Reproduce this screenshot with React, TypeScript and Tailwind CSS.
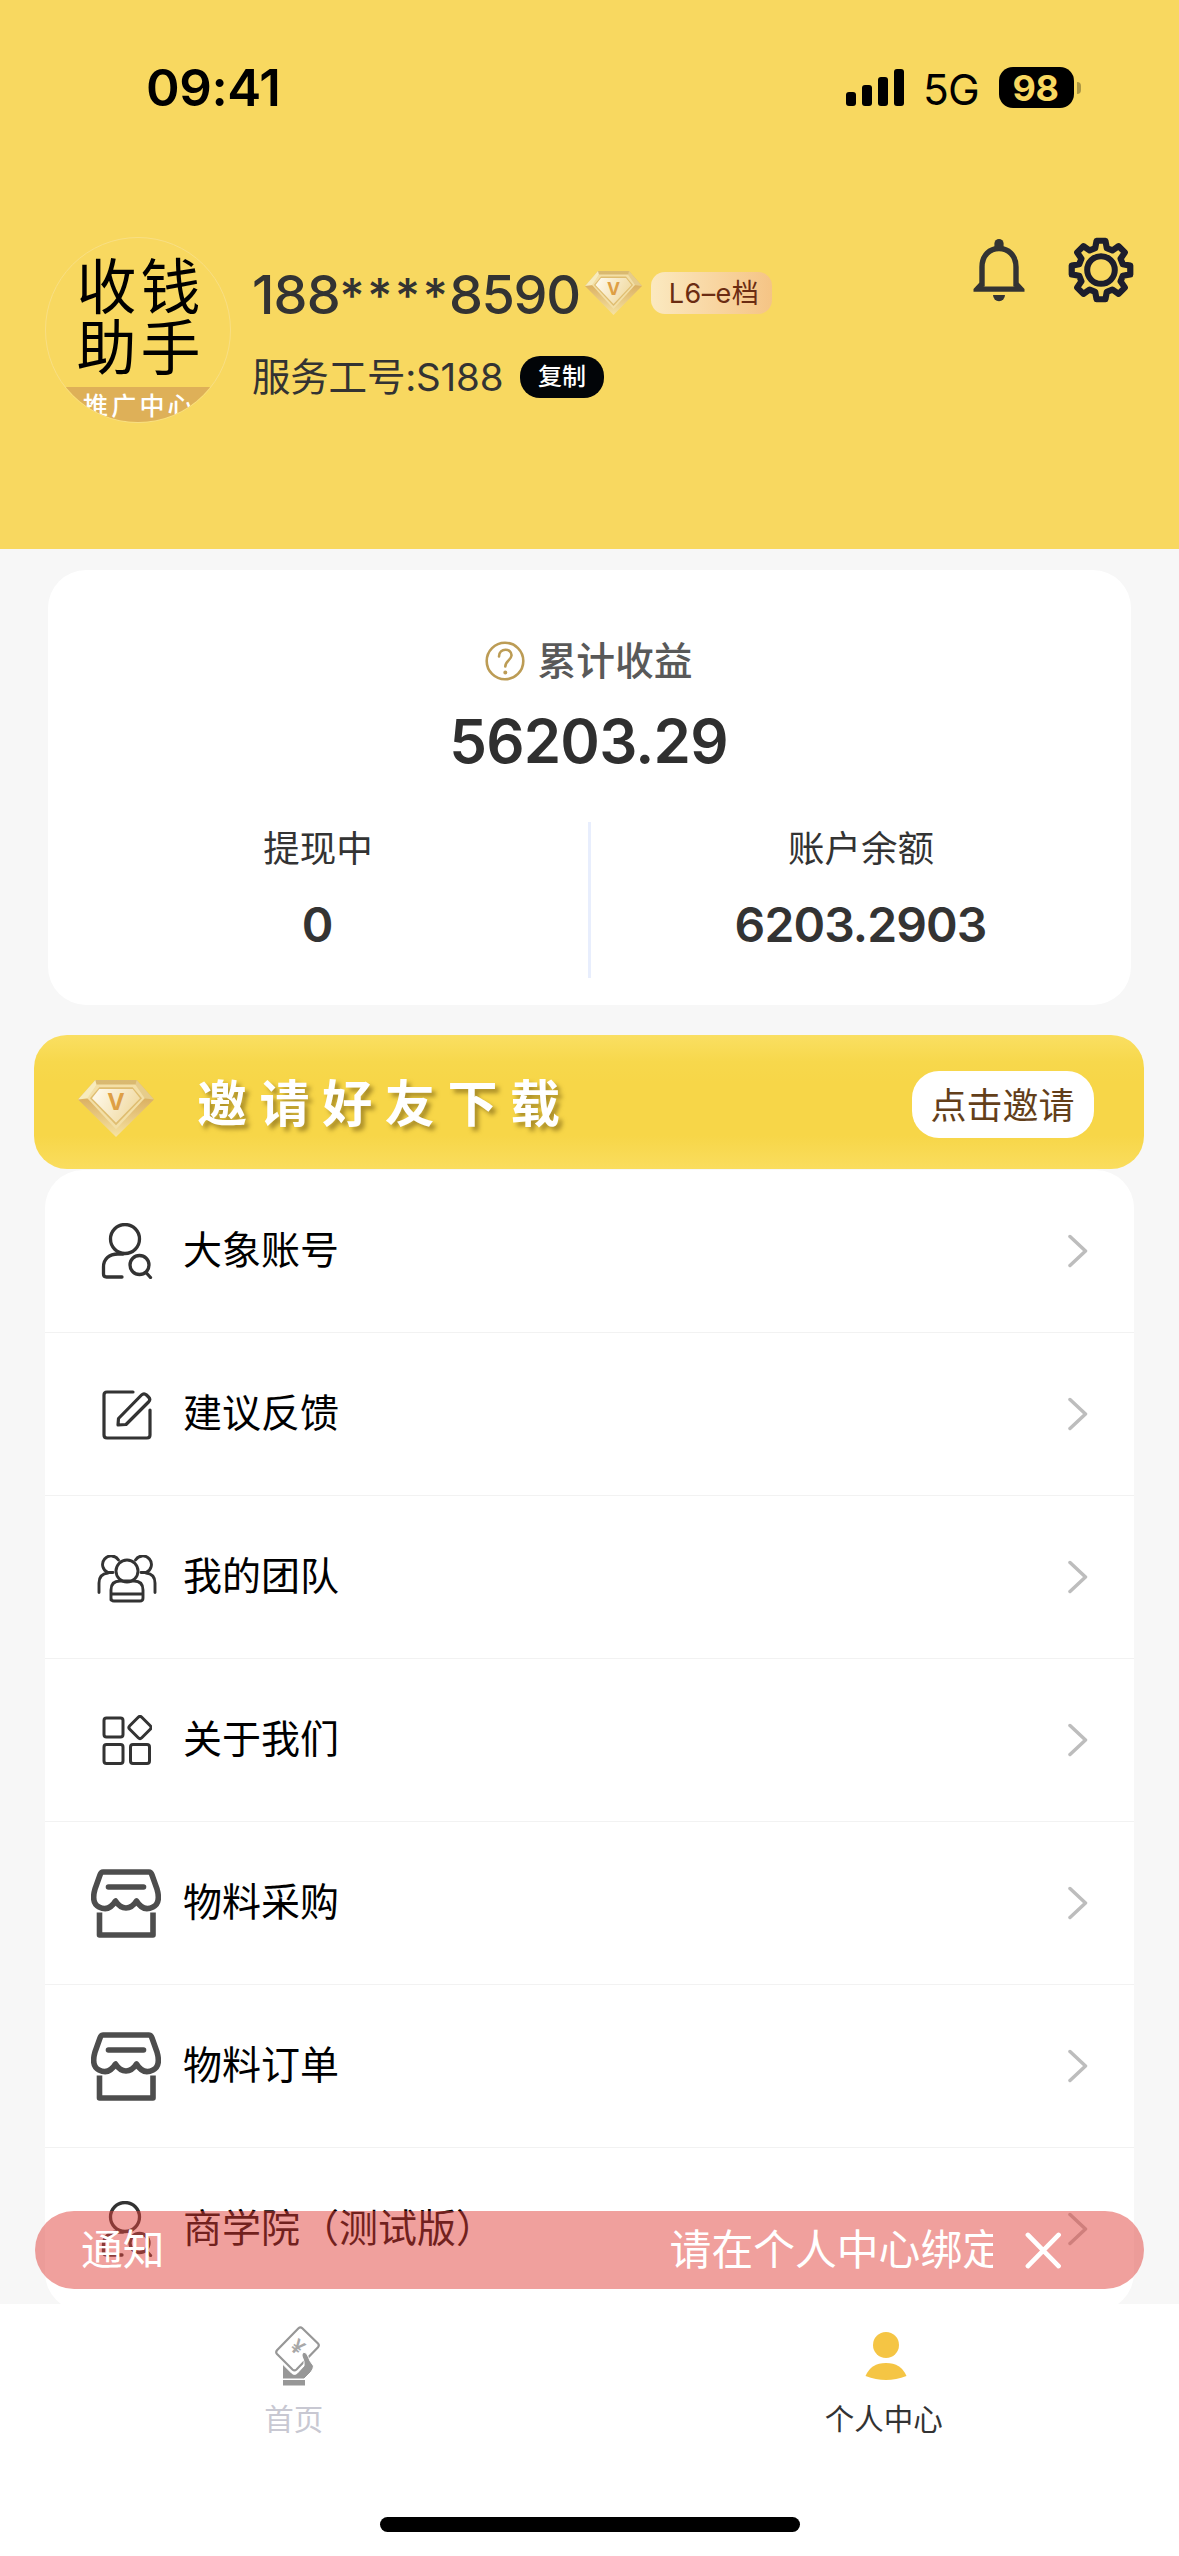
import React, { type ReactNode } from 'react';

const strokeProps = {
  fill: 'none',
  strokeLinecap: 'round' as const,
  strokeLinejoin: 'round' as const,
};

function Diamond({ className, id }: { className: string; id: string }) {
  return (
    <svg viewBox="0 0 57 44" preserveAspectRatio="none" className={className}>
      <defs>
        <linearGradient id={`${id}-rim`} x1="0" y1="0" x2="0" y2="1">
          <stop offset="0" stopColor="#d9ba72" />
          <stop offset="0.35" stopColor="#dcb264" />
          <stop offset="1" stopColor="#f6e3a4" />
        </linearGradient>
        <linearGradient id={`${id}-face`} x1="0" y1="0" x2="1" y2="0.4">
          <stop offset="0" stopColor="#fffbf0" />
          <stop offset="1" stopColor="#f1dba4" />
        </linearGradient>
      </defs>
      <path d="M13 0H44L57 15L28.500 44L0 15Z" fill={`url(#${id}-rim)`} />
      <path d="M13 0L0 15L8 14L14 4Z" fill="#f7ebbd" />
      <path d="M44 0L57 15L49 14L43 4Z" fill="#e6cc8b" />
      <path d="M14 3.500H43L50 14L28.500 38L7 14Z" fill="#f3dfa6" />
      <path d="M16 5.500H41L48 14L28.500 35L9 14Z" fill="#dfbd70" />
      <path d="M16 7H41L46.500 14L28.500 33L10.500 14Z" fill={`url(#${id}-face)`} />
      <text x="28.500" y="23.500" textAnchor="middle" fontFamily="Inter" fontWeight="700" fontSize="17.500" fill="#de9f45">
        V
      </text>
    </svg>
  );
}

function Bell() {
  return (
    <svg viewBox="0 0 52 63" className="h-[63px] w-[52px]" fill="#333">
      <path d="M9 47.500V28C9 16 17 9.500 26 9.500S43 16 43 28V47.500" fill="none" stroke="#333" strokeWidth="5.400" />
      <path d="M6.500 43.500L0.500 50V52.700H51.500V50L45.500 43.500L41 47.500H11Z" />
      <rect x="21.400" y="0" width="9.200" height="11" rx="4.600" />
      <path d="M20 56H32A6 6.200 0 0 1 20 56Z" />
    </svg>
  );
}

const gearPoints = Array.from({ length: 8 }, (_, i) => {
  const a = (i * Math.PI) / 4;
  const point = (r: number, d: number) =>
    `${(33 + r * Math.sin(a + d)).toFixed(2)} ${(33 - r * Math.cos(a + d)).toFixed(2)}`;
  return [point(22.6, -0.26), point(29.6, -0.15), point(29.6, 0.15), point(22.6, 0.26)];
}).flat();

function Gear() {
  return (
    <svg viewBox="0 0 66 66" className="size-[66px]" stroke="#1d1e2c" {...strokeProps}>
      <path d={`M${gearPoints.join('L')}Z`} strokeWidth="6.200" />
      <circle cx="33" cy="33" r="13.800" strokeWidth="6" />
    </svg>
  );
}

function AccountIcon() {
  return (
    <svg viewBox="0 0 52 56" className="h-[56px] w-[52px]" stroke="#333" strokeWidth="3.300" {...strokeProps}>
      <ellipse cx="24" cy="16" rx="14.500" ry="14.500" />
      <path d="M22 31H17C8 31 2.500 36 2.500 44V51Q2.500 54 5.500 54H21" />
      <circle cx="38.500" cy="42" r="9.500" />
      <path d="M45 49.500L49.500 54.500" />
    </svg>
  );
}

function FeedbackIcon() {
  return (
    <svg viewBox="0 0 50 50" className="mt-[2px] size-[50px]" stroke="#333" strokeWidth="3.200" {...strokeProps}>
      <path d="M31 2H5Q2 2 2 5V45Q2 48 5 48H45Q48 48 48 45V20" />
      <path d="M16 35L16.500 28.500L39.500 5Q42 2.500 44.500 5L46.500 7Q49 9.500 46.500 12L24 34.500Z" />
    </svg>
  );
}

function TeamIcon() {
  return (
    <svg viewBox="0 0 60 48" className="mt-[3px] h-[48px] w-[60px]" stroke="#333" strokeWidth="2.900" {...strokeProps}>
      <circle cx="30" cy="16" r="11" />
      <path d="M14 45V35Q14 26 23 26H37Q46 26 46 35V43Q46 46 43 46H17Q14 46 14 43M14 39H46" />
      <path d="M21.500 5A8.600 8.600 0 1 0 11 17.500H16M11 18Q2 19 2 28V37.500" />
      <path d="M38.500 5A8.600 8.600 0 1 1 49 17.500H44M49 18Q58 19 58 28V37.500" />
    </svg>
  );
}

function AboutIcon() {
  return (
    <svg viewBox="0 0 50 50" className="size-[50px]" stroke="#333" strokeWidth="3" {...strokeProps}>
      <rect x="2" y="3" width="19" height="19" rx="2.500" />
      <rect x="2" y="29.500" width="19" height="19" rx="2.500" />
      <rect x="28.500" y="29.500" width="19" height="19" rx="2.500" />
      <rect x="29.500" y="4" width="17" height="17" rx="2.500" transform="rotate(45 38 12.500)" />
    </svg>
  );
}

function StoreIcon() {
  return (
    <svg viewBox="0 0 70 69" className="mr-[3px] h-[69px] w-[70px]" stroke="#4d4d4d" strokeWidth="5.600" {...strokeProps}>
      <path d="M12 3H58Q60 3 61 6L66 20Q70 34 62 38Q52 43 45.500 32Q41 39 35 39Q29 39 24.500 32Q18 43 8 38Q0 34 4 20L9 6Q10 3 12 3Z" />
      <path d="M17.500 18H52.500" />
      <path d="M8.500 43.500V66H62V43.500" strokeLinecap="butt" />
    </svg>
  );
}

function Chevron() {
  return (
    <svg viewBox="0 0 20 34" className="h-[34px] w-[20px]" stroke="#bdbdbd" strokeWidth="3.500" {...strokeProps}>
      <path d="M2 2.500L17.500 17L2 31.500" />
    </svg>
  );
}

function HomeIcon() {
  return (
    <svg viewBox="0 0 46 60" className="h-[60px] w-[46px]">
      <path d="M23.500 2.300Q25.400 0.400 27.300 2.300L43 17.500Q44.600 19.200 43 21.200L21.500 43.500Q19.400 45.300 17.500 43.500L2 28Q0.400 26.200 2 24.200Z" fill="none" stroke="#979797" strokeWidth="2.200" />
      <text x="22.500" y="28" textAnchor="middle" fontFamily="Inter" fontWeight="600" fontSize="20" fill="#a8a8a8" transform="rotate(40 22.500 21)">
        ¥
      </text>
      <path d="M7.500 38L17 47.500Q19.500 49.500 22 47.500L29 40Q30 36 27 30Q27 26 30 26.500Q32 27 35 35L38.500 40Q38.500 43 36 46L29 53H7.500Z" fill="#979797" stroke="#fff" strokeWidth="1" />
      <rect x="8" y="54" width="22" height="5.500" fill="#979797" />
    </svg>
  );
}

function PersonIcon() {
  return (
    <svg viewBox="0 0 42 50" className="h-[50px] w-[42px]" fill="#f5c544">
      <circle cx="21" cy="14" r="13" />
      <path d="M0.500 45Q6 32 21 32T41.500 45Q31 49 21 49T0.500 45Z" />
    </svg>
  );
}

const menu: { label: string; icon: ReactNode }[] = [
  { label: '大象账号', icon: <AccountIcon /> },
  { label: '建议反馈', icon: <FeedbackIcon /> },
  { label: '我的团队', icon: <TeamIcon /> },
  { label: '关于我们', icon: <AboutIcon /> },
  { label: '物料采购', icon: <StoreIcon /> },
  { label: '物料订单', icon: <StoreIcon /> },
  { label: '商学院（测试版）', icon: <AccountIcon /> },
];

function StatusBar() {
  return (
    <div className="flex h-[176px] items-start justify-between pl-[146px] pr-[98px] pt-[67px] text-black">
      <div className="mt-[-4px] text-[51px] leading-[50px] font-semibold tracking-[-0.4px]">09:41</div>
      <div className="flex h-[41px] items-center">
        <div className="flex h-[37px] items-end gap-[6px]">
          <span className="h-[14px] w-[10px] rounded-[3px] bg-black" />
          <span className="h-[21px] w-[10px] rounded-[3px] bg-black" />
          <span className="h-[29px] w-[10px] rounded-[3px] bg-black" />
          <span className="h-[37px] w-[10px] rounded-[3px] bg-black" />
        </div>
        <span className="mt-[4px] ml-[19px] w-[76px] text-[42.500px] leading-[42px] tracking-[-0.8px]">5G</span>
        <span className="flex h-[41px] w-[75px] items-center justify-center rounded-[14px] bg-black pt-px pr-[2px] text-[36px] leading-[41px] font-bold tracking-[-0.5px] text-[#f8d860]">
          98
        </span>
        <span className="ml-[3px] h-[12px] w-[4px] rounded-r-full bg-[#ad9743]" />
      </div>
    </div>
  );
}

function Profile() {
  return (
    <div className="flex items-start pl-[45px] pr-[45px] pt-[61px]">
      <div className="flex size-[186px] shrink-0 flex-col items-center overflow-hidden rounded-full border border-[#f9df84]">
        <div className="mt-[19px] ml-[5px] w-[130px] text-center text-[60px] leading-[61px] tracking-[4px] text-black">
          <div>收钱</div>
          <div>助手</div>
        </div>
        <div className="mt-[8px] w-[186px] flex-1 bg-[#deb058] pl-[38px] text-[25px] leading-[38px] font-medium tracking-[3.2px] whitespace-nowrap text-white">
          推广中心
        </div>
      </div>
      <div className="ml-[21px] flex flex-col text-[#333]">
        <div className="mt-[28px] flex h-[56px] items-center">
          <span className="flex w-[333px] pt-[4px] text-[54px] leading-[56px] font-medium whitespace-nowrap">
            <span className="w-[86px] tracking-[-0.8px]">188</span>
            <span className="mt-px grid w-[111px] grid-cols-4 text-center text-[48px]">
              <span>*</span>
              <span>*</span>
              <span>*</span>
              <span>*</span>
            </span>
            <span className="tracking-[-1.400px]">8590</span>
          </span>
          <Diamond id="gem-small" className="h-[44px] w-[57px]" />
          <span className="ml-[9px] flex h-[42px] w-[121px] items-center justify-center rounded-[14px] bg-linear-to-r from-[#fbe9c0] to-[#f5c485] pt-px pl-[5px] text-[27px] leading-[42px] tracking-[0.4px] text-[#6b2c12]">
            L6–e档
          </span>
        </div>
        <div className="mt-[34px] flex h-[44px] items-center">
          <span className="w-[268px] text-[38.500px] leading-[44px] tracking-[-0.2px] whitespace-nowrap">服务工号:S188</span>
          <span className="flex h-[42px] w-[84px] items-center justify-center rounded-[20px] bg-[#020508] text-[24px] leading-[42px] font-medium text-white">
            复制
          </span>
        </div>
      </div>
      <div className="ml-auto flex items-center gap-[43px]">
        <Bell />
        <Gear />
      </div>
    </div>
  );
}

function Earnings() {
  return (
    <section className="mx-[48px] mt-[21px] flex h-[435px] flex-col items-center rounded-[38px] bg-white text-[#333]">
      <div className="mt-[66px] flex h-[50px] items-center pr-[1px]">
        <svg viewBox="0 0 40 40" className="size-[40px]" stroke="#bc9c55" strokeWidth="2.600" {...strokeProps}>
          <circle cx="20" cy="20" r="18.300" />
          <path d="M14 15.500C14 6.500 27 6.800 26.500 14.500C26.200 19 20.300 20 20.300 25.500" />
          <circle cx="20.300" cy="31.500" r="1" fill="#bc9c55" strokeWidth="2" />
        </svg>
        <span className="ml-[12px] text-[38.800px] leading-[50px] font-medium text-[#595959]">累计收益</span>
      </div>
      <div className="mt-[24px] pr-[2px] text-[60px] leading-[62px] font-semibold tracking-[-0.8px] text-[#2f2f2f]">56203.29</div>
      <div className="mt-[50px] flex h-[156px] w-full items-stretch">
        <div className="flex w-[540px] flex-col items-center">
          <span className="mt-[2px] text-[36.500px] leading-[50px]">提现中</span>
          <span className="mt-[22px] pr-px text-[48px] leading-[58px] font-semibold">0</span>
        </div>
        <div className="w-[3px] bg-[#e8eefd]" />
        <div className="flex w-[540px] flex-col items-center">
          <span className="mt-[2px] text-[36.500px] leading-[50px]">账户余额</span>
          <span className="mt-[22px] pr-px text-[48px] leading-[58px] font-semibold tracking-[-0.9px]">6203.2903</span>
        </div>
      </div>
    </section>
  );
}

function InviteBanner() {
  return (
    <section className="mt-[30px] mr-[35px] ml-[34px] flex h-[134px] items-center rounded-[33px] bg-[linear-gradient(180deg,#fadf62_0%,#f7d84c_20%,#f7d648_35%,#f7d648_75%,#fadd5e_100%)] pr-[50px] pl-[44px]">
      <Diamond id="gem-large" className="mt-[13px] h-[57px] w-[76px]" />
      <span className="mt-[3px] ml-[43px] text-[50px] leading-[60px] font-bold tracking-[12.600px] text-white [text-shadow:4px_4px_4px_rgba(120,95,20,0.6)]">
        邀请好友下载
      </span>
      <span className="mt-[5px] ml-auto flex h-[67px] w-[182px] items-center justify-center rounded-[27px] bg-white pt-[3px] pr-px text-[36px] leading-[60px] text-[#633f1a]">
        点击邀请
      </span>
    </section>
  );
}

function Notice() {
  return (
    <div className="absolute bottom-[15px] left-[35px] flex h-[78px] w-[1109px] items-center rounded-full bg-[rgba(226,66,60,0.5)] pl-[46px] text-[41.800px] leading-[78px] text-white">
      <span>通知</span>
      <span className="ml-[505px] w-[323px] overflow-hidden whitespace-nowrap">请在个人中心绑定</span>
      <svg viewBox="0 0 38 38" className="ml-[32px] size-[37px]" stroke="#fff" strokeWidth="4.800" {...strokeProps}>
        <path d="M3 3L34.500 35M34.500 3L3 35" />
      </svg>
    </div>
  );
}

function TabBar() {
  return (
    <nav className="grid h-[213px] grid-cols-2 bg-white text-[29.500px] leading-[40px]">
      <div className="flex flex-col items-center pt-[22px] pr-[2px] text-[#c8c8d2]">
        <div className="ml-[8px]">
          <HomeIcon />
        </div>
        <span className="mt-[13px]">首页</span>
      </div>
      <div className="flex flex-col items-center pt-[27px] text-[#333]">
        <div className="ml-[4px]">
          <PersonIcon />
        </div>
        <span className="mt-[18px] mr-[1px]">个人中心</span>
      </div>
    </nav>
  );
}

export default function App() {
  return (
    <main className="flex h-[2556px] w-[1179px] flex-col overflow-hidden bg-[#f7f7f7] font-['Inter','Noto_Sans_CJK_SC',sans-serif]">
      <div className="relative h-[2304px] overflow-hidden">
        <header className="h-[549px] bg-[#f8d860]">
          <StatusBar />
          <Profile />
        </header>
        <Earnings />
        <InviteBanner />
        <ul className="mx-[45px] mt-px rounded-[38px] bg-white">
          {menu.map((item) => (
            <li key={item.label} className="flex h-[163px] items-center border-b border-[#f2f2f2] pr-[46px] last:border-transparent">
              <span className="flex w-[164px] shrink-0 items-center justify-center">{item.icon}</span>
              <span className="mt-[-2px] ml-[-26px] text-[39px] leading-[50px] text-black">{item.label}</span>
              <span className="ml-auto">
                <Chevron />
              </span>
            </li>
          ))}
        </ul>
        <Notice />
      </div>
      <TabBar />
      <div className="flex flex-1 justify-center bg-white">
        <div className="h-[15px] w-[420px] rounded-full bg-black" />
      </div>
    </main>
  );
}
